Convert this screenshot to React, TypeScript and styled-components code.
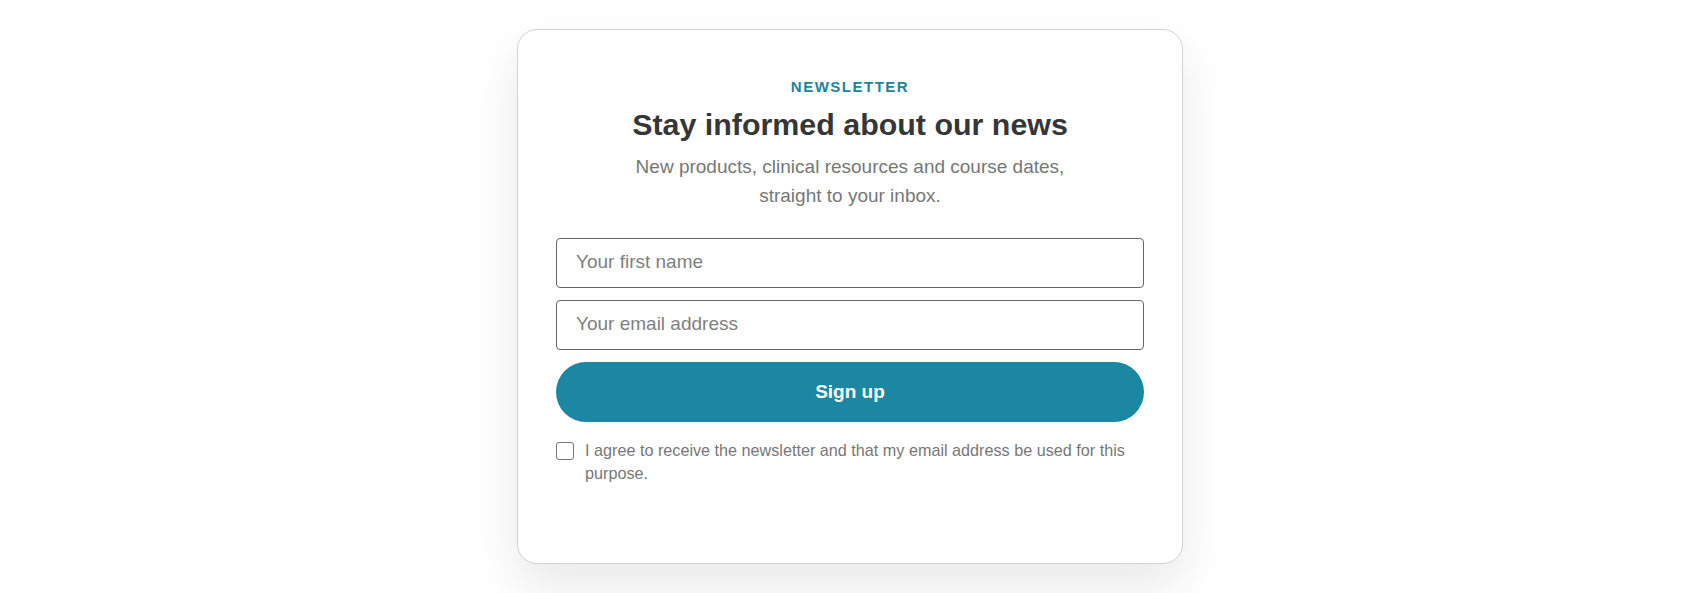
import React, { useState } from 'react';
import styled, { createGlobalStyle } from 'styled-components';

const GlobalStyle = createGlobalStyle`
  html, body {
    margin: 0;
    padding: 0;
    background: #ffffff;
    font-family: "Liberation Sans", Arial, sans-serif;
  }
`;

const Page = styled.div`
  display: flex;
  justify-content: center;
  align-items: flex-start;
  min-height: 100vh;
  box-sizing: border-box;
  padding-top: 29px;
`;

const Card = styled.form`
  box-sizing: border-box;
  width: 666px;
  height: 535px;
  padding: 48px 38px 0;
  background: #fff;
  border: 1px solid #d2d2d2;
  border-radius: 20px;
  box-shadow: 0 22px 48px rgba(0, 0, 0, 0.09);
  display: flex;
  flex-direction: column;
`;

const Eyebrow = styled.div`
  text-align: center;
  color: #1a84a0;
  font-size: 15px;
  font-weight: 700;
  line-height: 18px;
  letter-spacing: 1.5px;
`;

const Title = styled.h2`
  margin: 10px 0 0;
  text-align: center;
  color: #363636;
  font-size: 30.4px;
  font-weight: 700;
  line-height: 36px;
`;

const Lead = styled.p`
  margin: 10px auto 0;
  max-width: 440px;
  text-align: center;
  color: #777;
  font-size: 19px;
  line-height: 29px;
`;

const Fields = styled.div`
  display: flex;
  flex-direction: column;
  gap: 12px;
  margin-top: 28px;
`;

const Input = styled.input`
  box-sizing: border-box;
  width: 100%;
  height: 50px;
  padding: 0 19px 3px;
  border: 1px solid #666;
  border-radius: 4px;
  font-family: inherit;
  font-size: 19px;
  color: #333;
  outline: none;

  &::placeholder {
    color: #808080;
  }
`;

const SubmitButton = styled.button`
  height: 60px;
  border: none;
  border-radius: 30px;
  background: #1b87a2;
  color: #fff;
  font-family: inherit;
  font-size: 19px;
  font-weight: 700;
  cursor: pointer;
`;

const Consent = styled.label`
  display: flex;
  align-items: flex-start;
  gap: 11px;
  margin-top: 17px;
  color: #777;
  font-size: 16.2px;
  line-height: 23px;
  cursor: pointer;
`;

const Box = styled.span<{ checked: boolean }>`
  flex: none;
  box-sizing: border-box;
  width: 18px;
  height: 18px;
  margin-top: 3px;
  border: 1.5px solid #777;
  border-radius: 3px;
  background: ${({ checked }) => (checked ? '#1b87a2' : '#fff')};
`;

const HiddenCheck = styled.input`
  display: none;
`;

export default function App() {
  const [agreed, setAgreed] = useState(false);

  return (
    <>
      <GlobalStyle />
      <Page>
        <Card onSubmit={(e) => e.preventDefault()}>
          <Eyebrow>NEWSLETTER</Eyebrow>
          <Title>Stay informed about our news</Title>
          <Lead>New products, clinical resources and course dates, straight to your inbox.</Lead>
          <Fields>
            <Input type="text" placeholder="Your first name" />
            <Input type="email" placeholder="Your email address" />
            <SubmitButton type="submit">Sign up</SubmitButton>
          </Fields>
          <Consent>
            <HiddenCheck
              type="checkbox"
              checked={agreed}
              onChange={(e) => setAgreed(e.target.checked)}
            />
            <Box checked={agreed} />
            <span>
              I agree to receive the newsletter and that my email address be used for this purpose.
            </span>
          </Consent>
        </Card>
      </Page>
    </>
  );
}
